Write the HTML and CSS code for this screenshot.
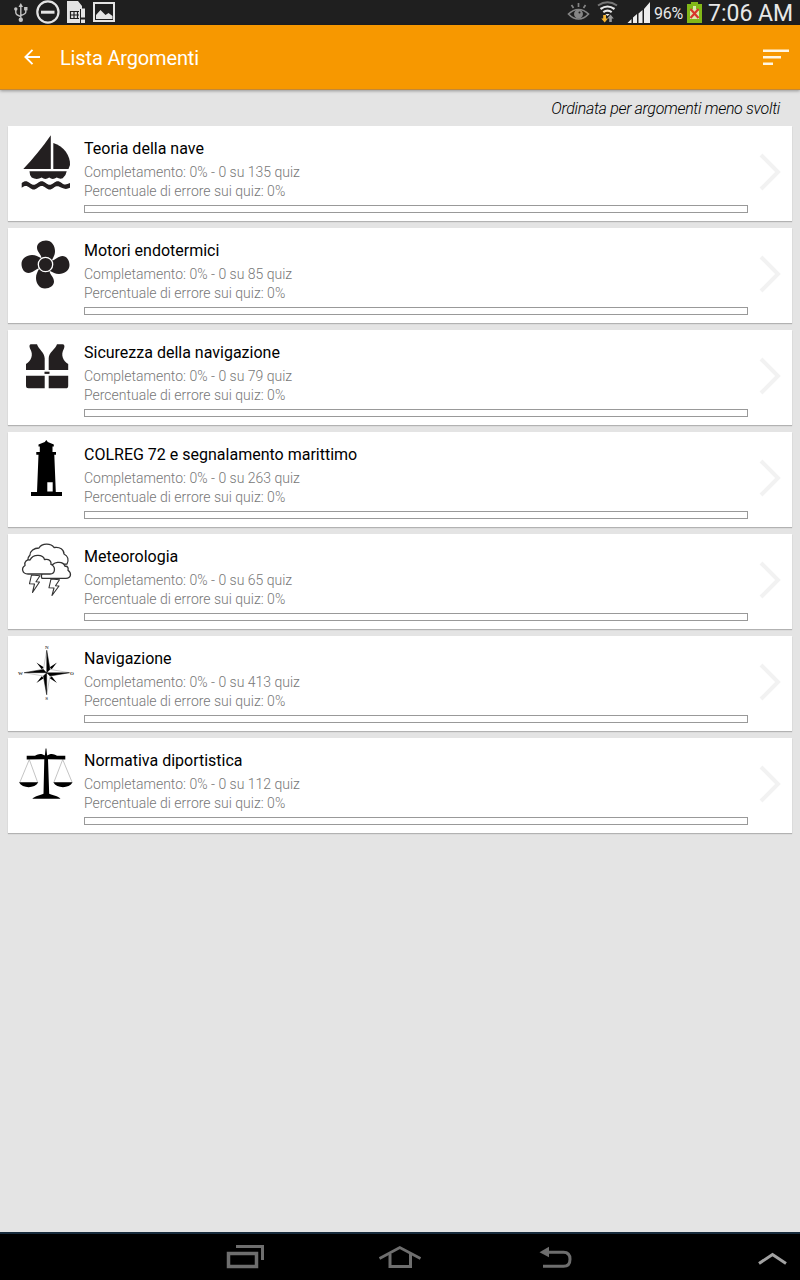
FILE: index.html
```html
<!DOCTYPE html>
<html lang="it">
<head>
  <meta charset="utf-8">
  <title>Lista Argomenti</title>
  <link rel="stylesheet" href="styles.css">
</head>
<body>
  <div class="status-bar">
    <svg class="status-left" width="120" height="25" viewBox="0 0 120 25" fill="none" stroke="#e4e4e4">
      <!-- usb -->
      <g stroke="#c4c4c4" stroke-width="1.4">
        <path d="M20.8 6v13M15.8 9.5v3q0 2.500 5 4M25.800 9v3q0 2-5 3.500"/>
        <path d="M18.500 7l2.300-4 2.300 4z" fill="#c4c4c4" stroke="none"/>
        <circle cx="20.800" cy="19.800" r="1.500" fill="#c4c4c4"/>
        <circle cx="15.800" cy="9" r="1" fill="#c4c4c4"/>
        <rect x="24.800" y="7.700" width="2" height="2" fill="#c4c4c4"/>
      </g>
      <circle cx="47.900" cy="12" r="10.600" stroke-width="2.200"/>
      <path d="M41 12.200h13.500" stroke-width="3"/>
      <!-- sim -->
      <path d="M67 1h11l4 5v3h-2v14H67z" fill="#e4e4e4" stroke="none"/>
      <path d="M70 11.500h9M70 15h9M70 18.500h9M70.500 11v8M74 11v8M77.500 11v8" stroke="#1f1f1f" stroke-width="1.200"/>
      <path d="M83 8.500v9M83 19.500v3.500" stroke-width="4"/>
      <!-- picture -->
      <rect x="94" y="3" width="20" height="18" stroke-width="2"/>
      <path d="M96 19v-4l4.500-5 5 5 3-2 4 3v3z" fill="#e4e4e4" stroke="none"/>
    </svg>
    <div class="status-right">
      <svg width="90" height="25" viewBox="564 0 90 25" fill="none">
        <!-- smart stay -->
        <g stroke="#858585" stroke-width="1.700">
          <path d="M568.500 14q4.500-4.500 10-4.500t10 4.500q-4.500 5-10 5t-10-5z"/>
          <circle cx="578.500" cy="14" r="3.600" fill="#858585"/>
          <path d="M578.500 3v4M571.500 5l2 3M585.500 5l-2 3"/>
          <circle cx="579.500" cy="12.500" r="1" fill="#1f1f1f" stroke="none"/>
        </g>
        <!-- wifi -->
        <path d="M598 5.500q9.500-6.500 19 0" stroke="#777" stroke-width="2"/>
        <path d="M600.500 9q7-5 14 0M603.300 12.200q4.200-3 8.400 0" stroke="#e8e8e8" stroke-width="2.200"/>
        <path d="M605.300 14h4.400l-2.200 2z" fill="#e8e8e8"/>
        <path d="M603.200 15h2.800v3.500h2l-3.300 4-3.400-4h1.900z" fill="#f3b431"/>
        <path d="M609.200 22h2.600v-3.500h2l-3.300-4-3.300 4h2z" fill="#999"/>
        <!-- signal -->
        <path d="M627.500 23l4-4v4zM633 23v-5.500l4-3.500v9zM638.500 23v-9.500l4-3.500v13zM644 23v-14l6-7v21z" fill="#eee"/>
      </svg>
      <span class="battery-level">96%</span>
      <svg width="15" height="21" viewBox="0 0 15 21">
        <path d="M4 0h7v2h4v19H0V2h4z" fill="#82b818"/>
        <path d="M6 4h3v3l3 2v8H3V9l3-2z" fill="#dbe8ae"/>
        <path d="M3.500 7l8 9M11.500 7l-8 9" stroke="#d7342c" stroke-width="2.200"/>
      </svg>
      <span class="clock">7:06 AM</span>
    </div>
  </div>

  <header class="app-bar">
    <svg width="16" height="16" viewBox="0 0 16 16" fill="none" stroke="#fff" stroke-width="1.900">
      <path d="M8.500.800L1.400 8l7.100 7.200M1.400 8H16"/>
    </svg>
    <h1>Lista Argomenti</h1>
    <svg width="26" height="17" viewBox="0 0 26 17" fill="#fff6e2">
      <path d="M0 .500h26v2.500H0zM0 7h18v2.500H0zM0 13.500h10v2.500H0z"/>
    </svg>
  </header>

  <p class="sort-label">Ordinata per argomenti meno svolti</p>

  <main class="topics">
    <div class="card">
      <svg class="icon" viewBox="0 0 60 62" fill="#231f20">
        <path d="M34.800 5.300V39H7.300C17 29 26 18 34.800 5.300z"/>
        <path d="M37.300 13C48 16 54.500 26 54 35l-1.500 4H37.300z"/>
        <path d="M13.500 41.300h37.200q-.500 4-4 7-3 1-6-.800-4 2.800-7.500 0-4 2.800-7.500 0-5 2.800-10 0-2.200-2-2.200-6.200z"/>
        <path d="M5.700 53c3-2.400 5-2.400 8 0s5 2.400 8 0 5-2.400 8 0 5 2.400 8 0 5-2.400 8 0 5 1.500 8.300 0v4.800c-3 1.500-5.300 1.500-8.300 0s-5-2.400-8 0-5 2.400-8 0-5-2.400-8 0-5 2.400-8 0-5-2.400-8 0z"/>
      </svg>
      <div class="info">
        <h2>Teoria della nave</h2>
        <p>Completamento: 0% - 0 su 135 quiz</p>
        <p>Percentuale di errore sui quiz: 0%</p>
        <div class="progress"></div>
      </div>
      <svg class="chevron" viewBox="0 0 24 40"><path d="M3 3l17 17L3 37"/></svg>
    </div>

    <div class="card">
      <svg class="icon" viewBox="0 0 60 62" fill="#231f20">
        <path d="M25.500 26C25 22 21 20 21 15.500c0-4 4-7 9-7 5.500 0 9 5 9 10.500 0 4-1.500 6-3 9z"/>
        <path d="M25.500 26C25 22 21 20 21 15.500c0-4 4-7 9-7 5.500 0 9 5 9 10.500 0 4-1.500 6-3 9z" transform="rotate(90 29.500 32.500)"/>
        <path d="M25.500 26C25 22 21 20 21 15.500c0-4 4-7 9-7 5.500 0 9 5 9 10.500 0 4-1.500 6-3 9z" transform="rotate(180 29.500 32.500)"/>
        <path d="M25.500 26C25 22 21 20 21 15.500c0-4 4-7 9-7 5.500 0 9 5 9 10.500 0 4-1.500 6-3 9z" transform="rotate(270 29.500 32.500)"/>
        <circle cx="29.500" cy="32.500" r="7.200" stroke="#fff" stroke-width="1.300"/>
      </svg>
      <div class="info">
        <h2>Motori endotermici</h2>
        <p>Completamento: 0% - 0 su 85 quiz</p>
        <p>Percentuale di errore sui quiz: 0%</p>
        <div class="progress"></div>
      </div>
      <svg class="chevron" viewBox="0 0 24 40"><path d="M3 3l17 17L3 37"/></svg>
    </div>

    <div class="card">
      <svg class="icon" viewBox="0 0 60 62" fill="#231f20">
        <path d="M15.500 10.300h5.500c1.500 5 7.500 8 7.700 14V36H10v-6c5-3 8-9 4-15.500-1-2.500-.500-4.200 1-4.200z"/>
        <path d="M46.500 10.300H41c-1.500 5-8.300 8-8.300 14V36h19.500v-6c-5-3-8-9-4.200-15.500 1-2.500.300-4.200-1.500-4.200z"/>
        <path d="M10 41.700h18.700v12.600H12.500q-2.500 0-2.500-2.500zM32.700 41.700h19.500v10q0 2.600-2.500 2.600h-17z"/>
        <rect x="28.500" y="37.700" width="5" height="2.200"/>
      </svg>
      <div class="info">
        <h2>Sicurezza della navigazione</h2>
        <p>Completamento: 0% - 0 su 79 quiz</p>
        <p>Percentuale di errore sui quiz: 0%</p>
        <div class="progress"></div>
      </div>
      <svg class="chevron" viewBox="0 0 24 40"><path d="M3 3l17 17L3 37"/></svg>
    </div>

    <div class="card">
      <svg class="icon" viewBox="0 0 60 62">
        <path d="M30.300 4l1.500 2 6 2.500v2h-1.300V16H40v2.800h-1.700l1.500 37.200H46v4H15v-4h6l1.500-37.200H20.300V16h3.500v-5.500h-1.300v-2l6.300-2.500z"/>
        <path d="M31.300 46.300h5.400v9.200h-5.400z" fill="#fff"/>
      </svg>
      <div class="info">
        <h2>COLREG 72 e segnalamento marittimo</h2>
        <p>Completamento: 0% - 0 su 263 quiz</p>
        <p>Percentuale di errore sui quiz: 0%</p>
        <div class="progress"></div>
      </div>
      <svg class="chevron" viewBox="0 0 24 40"><path d="M3 3l17 17L3 37"/></svg>
    </div>

    <div class="card">
      <svg class="icon" viewBox="0 0 60 62" fill="#fff" stroke="#333" stroke-width="1.300" stroke-linejoin="round">
        <path d="M14 28c-3-5-2-9 0-11 0-4 4-7 9-7 3-5 12-5 15-.500 6-1 10 2 10 6.500 4 2 5 6 3 10z"/>
        <path d="M26 40.300c-2-3 2-10 9-10 1-7 12-8 14-2 3-.500 3.500 2 3 4 4 3 3 8-2 8z"/>
        <path d="M12 36c-6 0-7-6-3-8.500-1-4 2-6 5-5.500 3-6 13-6 14.500-.500 5-1 7 2 6.500 5 5 2 4.500 9.500-1 9.500z"/>
        <path d="M15.500 37l8.500.700-4 6 3.500.300-7 10.500 2-8.500-5-.300zM35 41l8.500.700-4 6 3.500.300-7 9.500 2-7.500-5-.300z" stroke-width="1.100"/>
      </svg>
      <div class="info">
        <h2>Meteorologia</h2>
        <p>Completamento: 0% - 0 su 65 quiz</p>
        <p>Percentuale di errore sui quiz: 0%</p>
        <div class="progress"></div>
      </div>
      <svg class="chevron" viewBox="0 0 24 40"><path d="M3 3l17 17L3 37"/></svg>
    </div>

    <div class="card">
      <svg class="icon compass" viewBox="0 0 60 62">
        <path d="M20.700 22.700l20 20M40.700 22.700l-20 20" stroke="#aaa" stroke-width=".5"/>
        <path d="M20.700 22.700l7 4.500-2 2zM40.700 22.700l-7 4.500 2 2zM20.700 42.700l5-6.500 2 2zM40.700 42.700l-5-6.500-2 2z"/>
        <path d="M30.700 10.300l3.300 19.100 19.500 3.300-19.500 3.300-3.300 18.700-3.300-18.700-19.200-3.300 19.200-3.300z" fill="#fff" stroke="#999" stroke-width=".5"/>
        <path d="M30.700 10.300l3.300 19.100-3.300 3.300zM53.500 32.700l-19.500 3.300-3.300-3.300zM30.700 54.700l-3.300-18.700 3.300-3.300zM8.200 32.700l19.200-3.300 3.300 3.300z" stroke="#000" stroke-width=".4"/>
        <text x="30.700" y="8.700">N</text>
        <text x="30.700" y="60">S</text>
        <text x="4.500" y="34.500">W</text>
        <text x="56" y="34.500">O</text>
      </svg>
      <div class="info">
        <h2>Navigazione</h2>
        <p>Completamento: 0% - 0 su 413 quiz</p>
        <p>Percentuale di errore sui quiz: 0%</p>
        <div class="progress"></div>
      </div>
      <svg class="chevron" viewBox="0 0 24 40"><path d="M3 3l17 17L3 37"/></svg>
    </div>

    <div class="card">
      <svg class="icon" viewBox="0 0 60 62">
        <path d="M13.300 17.500L4 40M13.300 17.500L21.500 40M46.700 17.500L38 40M46.700 17.500L56 40" stroke="#aaa" stroke-width=".7"/>
        <path d="M29.600 6.500h.8l.6 6 .500 1c4-2.500 6-1.500 9.500.300h8.300v3.700l-17.300-.300 1.200 34.500c3 1.500 9 2 11.300 5H16.300c3-3 8-3.500 11.200-5l.8-34.500-17.600.300v-3.700H19c3.500-1.800 5.500-2.800 9.500-.300l.5-1z"/>
        <path d="M3 40.300h19.300c-3.500 6.500-15.800 6.500-19.300 0zM37.300 40.300h19.300c-3.500 6.500-15.800 6.500-19.300 0z"/>
      </svg>
      <div class="info">
        <h2>Normativa diportistica</h2>
        <p>Completamento: 0% - 0 su 112 quiz</p>
        <p>Percentuale di errore sui quiz: 0%</p>
        <div class="progress"></div>
      </div>
      <svg class="chevron" viewBox="0 0 24 40"><path d="M3 3l17 17L3 37"/></svg>
    </div>
  </main>

  <nav class="nav-bar">
    <svg width="800" height="46" viewBox="0 1234 800 46" fill="none" stroke="#6e6e6e" stroke-width="3">
      <path d="M228.500 1253.500h28v13h-28z" stroke-width="3.500"/>
      <path d="M236 1246.500h26.500v13.500"/>
      <path d="M379.500 1258.500l20.300-11 20.700 11" stroke-width="2.800"/>
      <path d="M390 1254v12.500h20.500V1254"/>
      <path d="M547 1252.200h16.500q6.500 0 6.500 7t-6.500 7H543"/>
      <path d="M539.500 1252.200l9.500-5.400v10.400z" fill="#6e6e6e" stroke="none"/>
      <path d="M759 1263.500l13.500-9 13.500 9" stroke="#a2a2a2"/>
    </svg>
  </nav>
</body>
</html>
```

FILE: styles.css
```css
* {
  box-sizing: border-box;
}

body {
  margin: 0;
  height: 1280px;
  display: flex;
  flex-direction: column;
  background-color: #e4e4e4;
  color: #000;
  font-family: Roboto, sans-serif;
  overflow: hidden;
}

h1, h2, p {
  margin: 0;
  font-weight: 400;
}

svg {
  display: block;
  flex: none;
}

.status-bar {
  height: 25px;
  background-color: #1f1f1f;
  color: #e8e8e8;
  display: flex;
  justify-content: space-between;
}

.status-right {
  display: flex;
  align-items: center;
  padding-right: 7px;
}

.battery-level {
  width: 33px;
  padding-top: 1px;
  font-size: 16px;
  letter-spacing: -0.3px;
}

.clock {
  width: 85px;
  margin-left: 6px;
  padding-top: 2px;
  font-size: 23px;
  line-height: 25px;
  white-space: nowrap;
}

.app-bar {
  height: 65px;
  padding: 0 11px 0 24px;
  display: flex;
  align-items: center;
  background-color: #f79800;
  border-bottom: 1px solid #c48836;
  box-shadow: 0 1px 3px rgba(0, 0, 0, 0.35);
  color: #fff;
}

.app-bar h1 {
  flex: 1;
  margin-left: 20px;
  padding-top: 2px;
  font-size: 20px;
  letter-spacing: -0.15px;
}

.sort-label {
  height: 36px;
  padding-right: 20px;
  font-size: 16px;
  font-style: italic;
  font-weight: 300;
  letter-spacing: -0.32px;
  line-height: 38px;
  text-align: right;
}

.topics {
  flex: 1;
  padding: 0 8px;
  display: flex;
  flex-direction: column;
  gap: 7px;
}

.card {
  height: 95px;
  padding: 4px 10px 0 8px;
  display: flex;
  background-color: #fff;
  box-shadow: 0 1px 1px rgba(0, 0, 0, 0.22);
}

.icon {
  width: 60px;
  height: 62px;
}

.compass text {
  font-family: "Liberation Serif", serif;
  font-size: 5px;
  font-weight: bold;
  text-anchor: middle;
  fill: #444;
}

.info {
  flex: 1;
  padding: 9px 0 0 8px;
}

.info h2 {
  font-size: 16px;
  line-height: 20px;
  margin-bottom: 4px;
}

.info p {
  color: #777;
  font-size: 14px;
  font-weight: 300;
  line-height: 19px;
}

.progress {
  height: 8px;
  margin-top: 4px;
  border: 1px solid #999;
}

.chevron {
  width: 24px;
  height: 40px;
  margin: 22px 0 0 10px;
  fill: none;
  stroke: #f2f2f2;
  stroke-width: 4;
}

.nav-bar {
  height: 48px;
  background-color: #000;
  border-top: 2px solid #172b3c;
}
```
